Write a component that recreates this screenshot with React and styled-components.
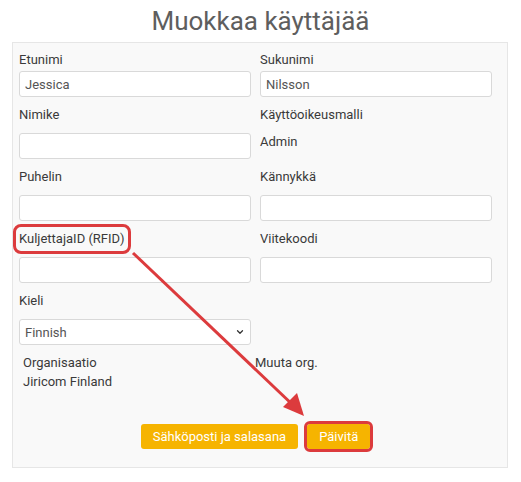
import styled, { createGlobalStyle } from "styled-components";
import { ChevronDown } from "lucide-react";

const GlobalStyle = createGlobalStyle`
  body {
    margin: 0;
    background: #fff;
    font-family: Roboto, "Liberation Sans", Arial, sans-serif;
  }
`;

function App() {
  return (
    <Page>
      <GlobalStyle />
      <Title>Muokkaa käyttäjää</Title>
      <Panel>
        <FormGrid>
          <Field $first>
            <Label>Etunimi</Label>
            <Input defaultValue="Jessica" />
          </Field>
          <Field $first>
            <Label>Sukunimi</Label>
            <Input defaultValue="Nilsson" />
          </Field>

          <Field>
            <Label>Nimike</Label>
            <Input />
          </Field>
          <Field>
            <Label>Käyttöoikeusmalli</Label>
            <Value>Admin</Value>
          </Field>

          <Field>
            <Label>Puhelin</Label>
            <Input />
          </Field>
          <Field>
            <Label>Kännykkä</Label>
            <Input />
          </Field>

          <Field>
            <Label $marked>KuljettajaID (RFID)</Label>
            <Input />
          </Field>
          <Field>
            <Label>Viitekoodi</Label>
            <Input />
          </Field>

          <Field>
            <Label>Kieli</Label>
            <SelectWrap>
              <Select defaultValue="fi">
                <option value="fi">Finnish</option>
                <option value="sv">Swedish</option>
                <option value="en">English</option>
              </Select>
              <Chevron size={10} strokeWidth={3} />
            </SelectWrap>
          </Field>
          <div />
        </FormGrid>

        <OrgRow>
          <OrgCell>
            <OrgText>Organisaatio</OrgText>
            <OrgText>Jiricom Finland</OrgText>
          </OrgCell>
          <OrgCell>
            <OrgText>Muuta org.</OrgText>
          </OrgCell>
        </OrgRow>

        <Actions>
          <Button>Sähköposti ja salasana</Button>
          <Button $marked>Päivitä</Button>
        </Actions>
      </Panel>

      {/* annotation arrow drawn over the form */}
      <Arrow viewBox="0 0 521 482" width="521" height="482">
        <line x1="133" y1="253" x2="295" y2="407" stroke="#dc3b3d" strokeWidth="3" />
        <polygon points="304,416 283,407 297,393" fill="#dc3b3d" />
      </Arrow>
    </Page>
  );
}

const Page = styled.div`
  position: relative;
  width: 521px;
  height: 482px;
  overflow: hidden;
`;

const Title = styled.h1`
  margin: 0 0 5px;
  padding-top: 5px;
  font-size: 26px;
  line-height: 32px;
  font-weight: 400;
  color: #5e5e5e;
  text-align: center;
`;

const Panel = styled.div`
  margin-left: 12px;
  width: 496px;
  height: 426px;
  box-sizing: border-box;
  padding: 8px 0 0 6px;
  background: #f9f9f9;
  border: 1px solid #e6e6e6;
`;

const FormGrid = styled.div`
  display: grid;
  grid-template-columns: 232px 232px;
  column-gap: 9px;
  row-gap: 9px;
`;

const Field = styled.div`
  display: flex;
  flex-direction: column;
  align-items: flex-start;
  gap: ${(p) => (p.$first ? "2px" : "9px")};
`;

const Label = styled.label`
  display: inline-block;
  font-size: 13px;
  line-height: 18px;
  color: #3a3a3a;
  border-radius: 2px;
  outline: ${(p) => (p.$marked ? "3px solid #dc3b3d" : "none")};
  outline-offset: 3px;
`;

const Value = styled.div`
  font-size: 13px;
  line-height: 18px;
  color: #3a3a3a;
`;

const Input = styled.input`
  width: 232px;
  height: 26px;
  box-sizing: border-box;
  padding: 0 5px;
  font-family: inherit;
  font-size: 13px;
  color: #555;
  background: #fff;
  border: 1px solid #d9d9d9;
  border-radius: 3px;
  outline: none;
`;

const SelectWrap = styled.div`
  position: relative;
  width: 232px;
`;

const Select = styled.select`
  appearance: none;
  width: 232px;
  height: 26px;
  box-sizing: border-box;
  padding: 0 5px;
  font-family: inherit;
  font-size: 13px;
  color: #555;
  background: #fff;
  border: 1px solid #d9d9d9;
  border-radius: 3px;
  outline: none;
`;

const Chevron = styled(ChevronDown)`
  position: absolute;
  right: 6px;
  top: 8px;
  color: #333;
  pointer-events: none;
`;

const OrgRow = styled.div`
  display: grid;
  grid-template-columns: 232px 232px;
  padding-left: 4px;
  margin-top: 8px;
`;

const OrgCell = styled.div`
  display: flex;
  flex-direction: column;
`;

const OrgText = styled.span`
  font-size: 13px;
  line-height: 19px;
  color: #3a3a3a;
`;

const Actions = styled.div`
  display: flex;
  justify-content: center;
  gap: 9px;
  width: 473px;
  margin-top: 33px;
`;

const Button = styled.button`
  height: 25px;
  padding: 0 12px;
  font-family: inherit;
  font-size: 13px;
  color: #fff;
  background: #f6b400;
  border: none;
  border-radius: 3px;
  outline: ${(p) => (p.$marked ? "3px solid #dc3b3d" : "none")};
  outline-offset: 0;
  cursor: pointer;
`;

const Arrow = styled.svg`
  position: absolute;
  left: 0;
  top: 0;
  pointer-events: none;
`;

export default App;
